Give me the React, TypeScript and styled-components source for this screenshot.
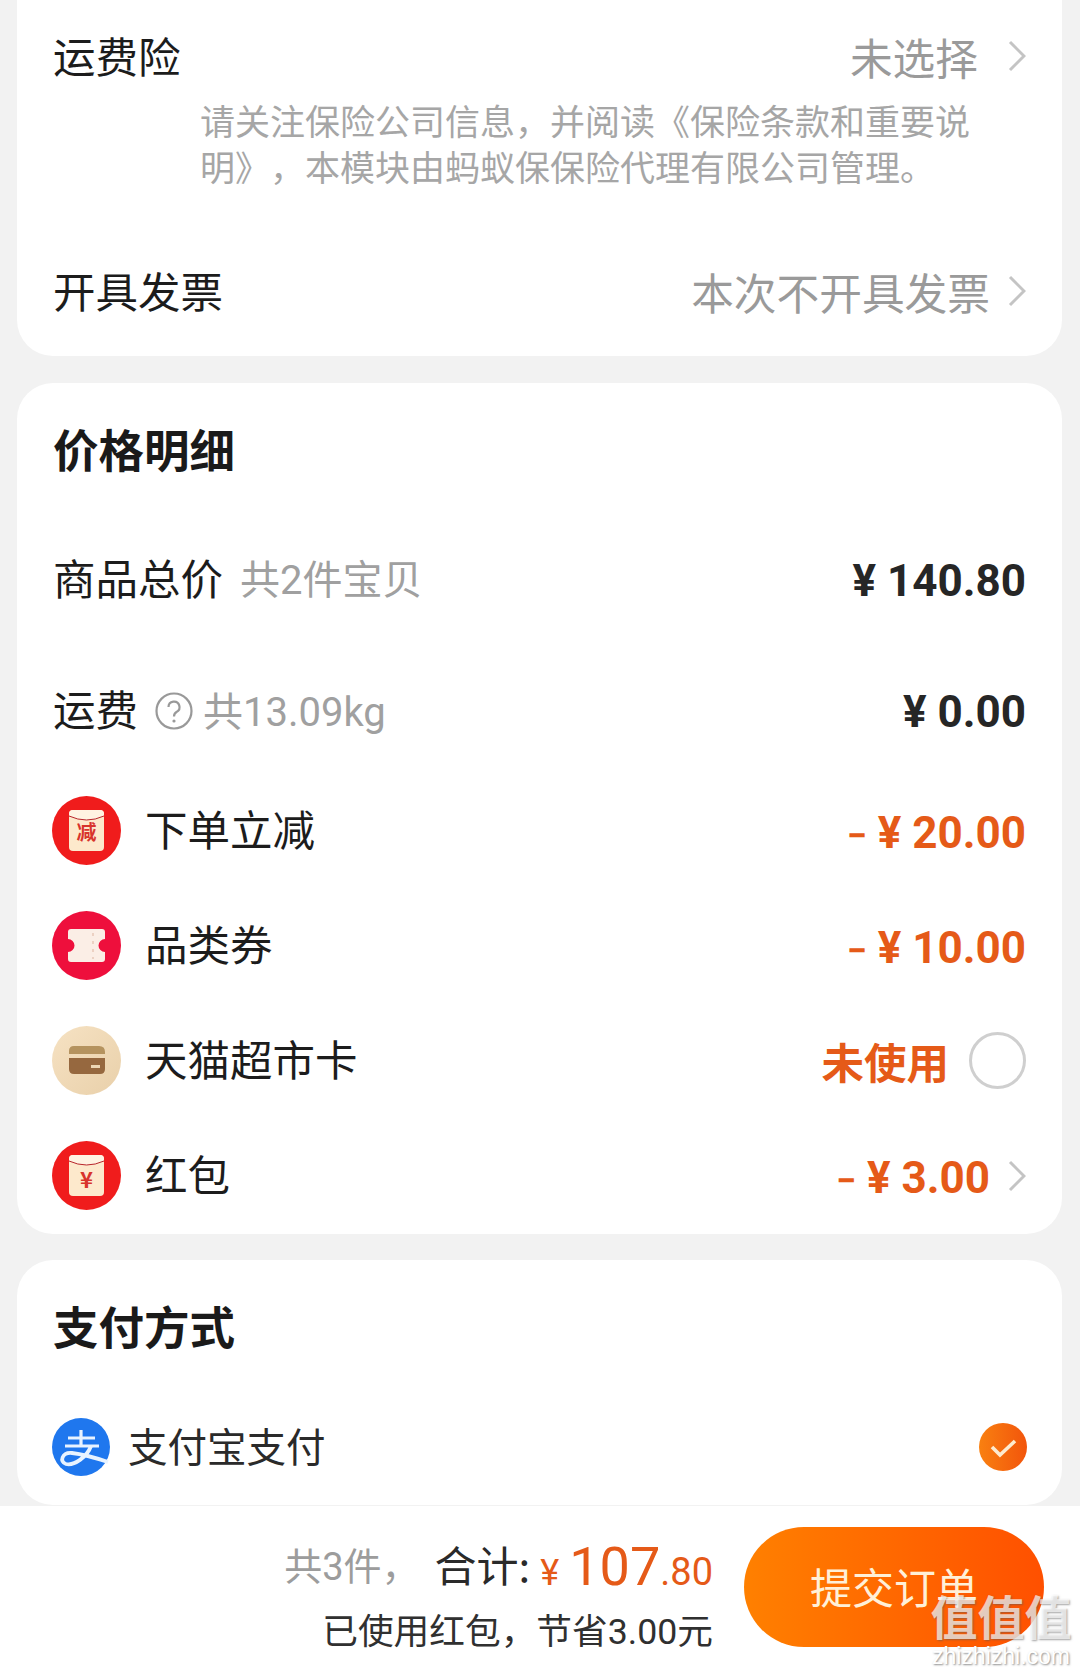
import React from 'react';
import styled, { createGlobalStyle } from 'styled-components';

const GlobalStyle = createGlobalStyle`
  html, body {
    margin: 0;
    padding: 0;
    background: #f2f2f2;
  }
  body {
    font-family: "Noto Sans CJK SC", "Noto Sans", sans-serif;
    color: #1c1c1c;
    text-spacing-trim: space-all;
  }
`;

const CJK = `"Noto Sans CJK SC", sans-serif`;
const NUM = `Roboto, "Noto Sans CJK SC", sans-serif`;

function Chevron() {
    return (
        <ChevronSvg viewBox="0 0 18 32">
            <polyline points="2,2 16,16 2,30" fill="none" stroke="#c4c4c4" strokeWidth="3" />
        </ChevronSvg>
    );
}

function EnvelopeIcon({ mark }: { mark: string }) {
    const isText = mark === '减';
    return (
        <IconSvg viewBox="0 0 69 69">
            <circle cx="34.5" cy="34.5" r="34.5" fill="#f01c1c" />
            <rect x="17" y="14" width="35" height="41" rx="4" fill="#fde9cc" />
            <path d="M17 20 Q34.5 28 52 20 L52 18 Q52 14 48 14 L21 14 Q17 14 17 18 Z" fill="#fff3e2" />
            <path d="M17 20 Q34.5 28 52 20" fill="none" stroke="#b8242a" strokeWidth="1" />
            <text x="34.5" y={isText ? 44 : 47} textAnchor="middle" fontSize={isText ? 20 : 22} fontWeight="700" fill="#d8342c" fontFamily={CJK}>
                {mark}
            </text>
        </IconSvg>
    );
}

function TicketIcon() {
    return (
        <IconSvg viewBox="0 0 69 69">
            <circle cx="34.5" cy="34.5" r="34.5" fill="#ee0f3c" />
            <path
                d="M19 18 H50 Q53 18 53 21 V28 A6.5 6.5 0 0 0 53 41 V48 Q53 51 50 51 H19 Q16 51 16 48 V41 A6.5 6.5 0 0 0 16 28 V21 Q16 18 19 18 Z"
                fill="#fbeee6"
            />
            <line x1="41" y1="22" x2="41" y2="48" stroke="#e8c8b8" strokeWidth="1.5" strokeDasharray="3 5" />
        </IconSvg>
    );
}

function CardIcon() {
    return (
        <IconSvg viewBox="0 0 69 69">
            <defs>
                <linearGradient id="beige" x1="0" y1="0" x2="1" y2="1">
                    <stop offset="0" stopColor="#f6e2c3" />
                    <stop offset="1" stopColor="#e9d0aa" />
                </linearGradient>
            </defs>
            <circle cx="34.5" cy="34.5" r="34.5" fill="url(#beige)" />
            <path d="M22 20 H47 Q53 20 53 26 V28 H17 V25 Q17 20 22 20 Z" fill="#b5935f" />
            <path d="M17 32 H53 V43 Q53 48 48 48 H22 Q17 48 17 43 Z" fill="#96683f" />
            <rect x="39" y="39" width="9" height="3" fill="#ecd6b4" />
        </IconSvg>
    );
}

function AlipayIcon() {
    return (
        <AlipaySvg viewBox="0 0 58 58">
            <circle cx="29" cy="29" r="29" fill="#1f77ee" />
            <path d="M16 20 H43 M29 12 V27 M13 28 H47" fill="none" stroke="#e8f3ff" strokeWidth="3.2" />
            <path
                d="M39 28 C35 39 22 48 14 46 C7 44 10 34 20 35 C29 36 41 39 56 44"
                fill="none"
                stroke="#e8f3ff"
                strokeWidth="3.8"
            />
        </AlipaySvg>
    );
}

function QuestionIcon() {
    return (
        <QuestionSvg viewBox="0 0 38 38">
            <circle cx="19" cy="19" r="17.5" fill="none" stroke="#999" strokeWidth="2.2" />
            <path d="M13.5 15 A5.5 5.5 0 1 1 21.5 20 Q19 21.5 19 24.5" fill="none" stroke="#999" strokeWidth="2.2" />
            <circle cx="19" cy="29" r="1.6" fill="#999" />
        </QuestionSvg>
    );
}

function CheckIcon() {
    return (
        <CheckSvg viewBox="0 0 48 48">
            <defs>
                <linearGradient id="checkFill" x1="0" y1="0" x2="1" y2="0">
                    <stop offset="0" stopColor="#f98010" />
                    <stop offset="1" stopColor="#f2550c" />
                </linearGradient>
            </defs>
            <circle cx="24" cy="24" r="24" fill="url(#checkFill)" />
            <polyline points="13,24 21,32 36,18" fill="none" stroke="#fdebcf" strokeWidth="3.6" />
        </CheckSvg>
    );
}

export default function App() {
    return (
        <Page>
            <GlobalStyle />
            <ServiceCard>
                <LineRow>
                    <Label>运费险</Label>
                    <Value>
                        未选择
                        <ChevronGap />
                        <Chevron />
                    </Value>
                </LineRow>
                <Note>请关注保险公司信息，并阅读《保险条款和重要说明》，本模块由蚂蚁保保险代理有限公司管理。</Note>
                <LineRow>
                    <Label>开具发票</Label>
                    <Value>
                        本次不开具发票
                        <Chevron />
                    </Value>
                </LineRow>
            </ServiceCard>

            <PriceCard>
                <Title>价格明细</Title>
                <TextRow>
                    <RowLeft>
                        <Label>商品总价</Label>
                        <Hint>共2件宝贝</Hint>
                    </RowLeft>
                    <Amount>¥ 140.80</Amount>
                </TextRow>
                <TextRow $short>
                    <RowLeft>
                        <Label>运费</Label>
                        <QuestionIcon />
                        <WeightHint>共13.09kg</WeightHint>
                    </RowLeft>
                    <Amount>¥ 0.00</Amount>
                </TextRow>
                <IconRow>
                    <RowLeft>
                        <EnvelopeIcon mark="减" />
                        <Label>下单立减</Label>
                    </RowLeft>
                    <Discount><Minus>−</Minus> ¥ 20.00</Discount>
                </IconRow>
                <IconRow>
                    <RowLeft>
                        <TicketIcon />
                        <Label>品类券</Label>
                    </RowLeft>
                    <Discount><Minus>−</Minus> ¥ 10.00</Discount>
                </IconRow>
                <IconRow>
                    <RowLeft>
                        <CardIcon />
                        <Label>天猫超市卡</Label>
                    </RowLeft>
                    <RowLeft>
                        <Unused>未使用</Unused>
                        <Radio />
                    </RowLeft>
                </IconRow>
                <IconRow>
                    <RowLeft>
                        <EnvelopeIcon mark="¥" />
                        <Label>红包</Label>
                    </RowLeft>
                    <RowLeft>
                        <Discount><Minus>−</Minus> ¥ 3.00</Discount>
                        <Chevron />
                    </RowLeft>
                </IconRow>
            </PriceCard>

            <PayCard>
                <Title>支付方式</Title>
                <PayRow>
                    <RowLeft>
                        <AlipayIcon />
                        <PayLabel>支付宝支付</PayLabel>
                    </RowLeft>
                    <CheckIcon />
                </PayRow>
            </PayCard>

            <Footer>
                <Summary>
                    <SummaryTop>
                        <Count>共3件，</Count>
                        <TotalLabel>合计:</TotalLabel>
                        <PriceGroup>
                            <Yen>¥</Yen>
                            <Big>107</Big>
                            <Cents>.80</Cents>
                        </PriceGroup>
                    </SummaryTop>
                    <Saved>已使用红包，节省3.00元</Saved>
                </Summary>
                <Submit>提交订单</Submit>
                <Watermark>
                    <WatermarkGlyphs>值值值</WatermarkGlyphs>
                    <WatermarkUrl>zhizhizhi.com</WatermarkUrl>
                </Watermark>
            </Footer>
        </Page>
    );
}

const Page = styled.div`
  width: 1080px;
  height: 1673px;
  overflow: hidden;
  background: #f2f2f2;
`;

const Card = styled.section`
  margin: 0 18px 0 17px;
  padding: 0 36px;
  background: #fff;
  border-radius: 36px;
  box-sizing: border-box;
`;

const ServiceCard = styled(Card)`
  height: 356px;
  padding-top: 17px;
  border-radius: 0 0 36px 36px;
`;

const PriceCard = styled(Card)`
  height: 851px;
  margin-top: 27px;
  padding-top: 34px;
`;

const PayCard = styled(Card)`
  height: 245px;
  margin-top: 26px;
  padding-top: 34px;
`;

const LineRow = styled.div`
  display: flex;
  align-items: center;
  justify-content: space-between;
  height: 82px;
`;

const Label = styled.span`
  padding-bottom: 5px;
  font-size: 42.5px;
  line-height: 1;
  color: #1c1c1c;
  white-space: nowrap;
`;

const Value = styled.span`
  display: flex;
  align-items: center;
  padding-bottom: 5px;
  font-size: 42.7px;
  color: #9a9a9a;
  white-space: nowrap;
`;

const ChevronGap = styled.span`
  width: 12px;
`;

const ChevronSvg = styled.svg`
  width: 18px;
  height: 32px;
  margin-left: 18px;
  flex: none;
`;

const Note = styled.p`
  margin: -2px 0 63px 147px;
  width: 790px;
  font-size: 35px;
  line-height: 46px;
  color: #a6a6a6;
`;

const Title = styled.h2`
  margin: 0;
  height: 66px;
  font-size: 45.5px;
  line-height: 62px;
  font-weight: 700;
  color: #1a1a1a;
`;

const TextRow = styled.div<{ $short?: boolean }>`
  display: flex;
  align-items: center;
  justify-content: space-between;
  box-sizing: border-box;
  height: ${(p) => (p.$short ? '128px' : '131px')};
  margin-top: ${(p) => (p.$short ? '0' : '31px')};
  padding-top: ${(p) => (p.$short ? '4px' : '0')};
`;

const IconRow = styled.div`
  display: flex;
  align-items: center;
  justify-content: space-between;
  height: 115px;
`;

const RowLeft = styled.div`
  display: flex;
  align-items: center;
`;

const Hint = styled.span`
  margin-left: 17px;
  padding-bottom: 5px;
  font-size: 40px;
  color: #a0a0a0;
  font-family: ${NUM};
  white-space: nowrap;
`;

const WeightHint = styled(Hint)`
  margin-left: 10px;
`;

const QuestionSvg = styled.svg`
  width: 38px;
  height: 38px;
  margin-left: 17px;
`;

const Amount = styled.span`
  padding-top: 2px;
  font-family: ${NUM};
  font-size: 44px;
  font-weight: 700;
  color: #262626;
  white-space: nowrap;
`;

const Discount = styled(Amount)`
  padding-top: 4px;
  color: #e55a18;
`;

const Minus = styled.span`
  font-size: 36px;
`;

const Unused = styled.span`
  font-size: 42.5px;
  font-weight: 700;
  color: #e55a18;
  white-space: nowrap;
`;

const Radio = styled.span`
  width: 57px;
  height: 57px;
  margin-left: 20px;
  border: 3px solid #cfcfcf;
  border-radius: 50%;
  box-sizing: border-box;
`;

const IconSvg = styled.svg`
  width: 69px;
  height: 69px;
  margin: 0 24px 0 -1px;
  flex: none;
`;

const AlipaySvg = styled.svg`
  width: 58px;
  height: 58px;
  margin-left: -1px;
  flex: none;
`;

const PayRow = styled.div`
  display: flex;
  align-items: center;
  justify-content: space-between;
  height: 100px;
  margin-top: 37px;
`;

const PayLabel = styled.span`
  margin-left: 18px;
  padding-bottom: 5px;
  font-size: 39.5px;
  color: #2a2a2a;
  white-space: nowrap;
`;

const CheckSvg = styled.svg`
  width: 48px;
  height: 48px;
  margin-right: -1px;
`;

const Footer = styled.footer`
  position: relative;
  display: flex;
  justify-content: flex-end;
  height: 167px;
  margin-top: 1px;
  padding: 21px 36px 0 0;
  box-sizing: border-box;
  background: #fff;
`;

const Summary = styled.div`
  display: flex;
  flex-direction: column;
  align-items: flex-end;
  margin-right: 31px;
`;

const SummaryTop = styled.div`
  display: flex;
  align-items: center;
  height: 72px;
  margin-bottom: 8px;
  white-space: nowrap;
`;

const Count = styled.span`
  font-size: 38px;
  color: #9c9c9c;
  font-family: ${NUM};
`;

const TotalLabel = styled.span`
  margin-left: 15px;
  font-size: 42px;
  color: #2a2a2a;
`;

const PriceGroup = styled.span`
  display: flex;
  align-items: baseline;
  padding-top: 8px;
  color: #e55a18;
  font-family: ${NUM};
`;

const Yen = styled.span`
  margin-left: 10px;
  font-size: 36px;
`;

const Big = styled.span`
  margin-left: 10px;
  font-size: 54px;
  line-height: 60px;
`;

const Cents = styled.span`
  font-size: 38px;
`;

const Saved = styled.span`
  font-size: 35.7px;
  line-height: 50px;
  color: #303030;
  font-family: ${NUM};
  white-space: nowrap;
`;

const Submit = styled.button`
  width: 300px;
  height: 120px;
  padding: 0 0 4px;
  border: 0;
  border-radius: 60px;
  background: linear-gradient(90deg, #ff8000, #ff5000);
  font-family: ${CJK};
  font-size: 42px;
  color: #fff0d8;
`;

const Watermark = styled.div`
  position: absolute;
  right: 8px;
  bottom: 5px;
  width: 142px;
  text-align: center;
`;

const WatermarkGlyphs = styled.div`
  font-size: 47px;
  line-height: 58px;
  font-weight: 700;
  color: rgba(255, 255, 255, 0.7);
  text-shadow: 1px 1px 2px rgba(90, 90, 90, 0.55);
`;

const WatermarkUrl = styled.div`
  font-family: "Liberation Sans", sans-serif;
  font-size: 23px;
  line-height: 24px;
  color: #fff;
  text-shadow: 1px 1px 2px rgba(90, 90, 90, 0.7);
`;
